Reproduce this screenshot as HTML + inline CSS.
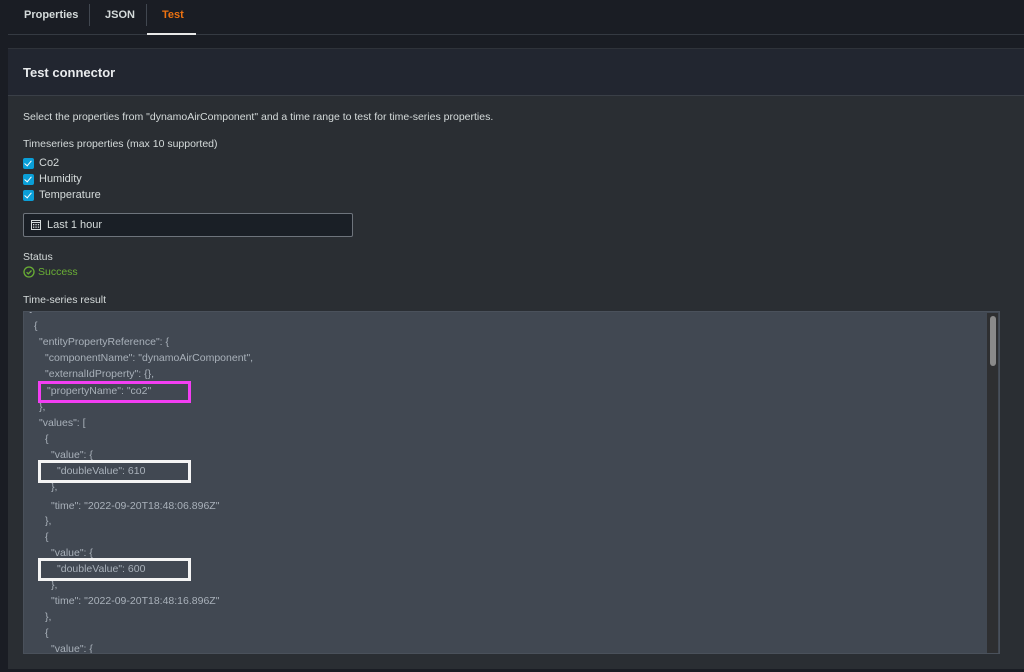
<!DOCTYPE html>
<html><head><meta charset="utf-8"><style>
*{margin:0;padding:0;box-sizing:border-box}
body{width:1024px;height:672px;background:#1a1d24;font-family:"Liberation Sans",sans-serif;position:relative;overflow:hidden;color:#d5dbdb}
.a{position:absolute;white-space:nowrap}
.tab{font-size:11px;font-weight:bold;top:9px;color:#d5dbdb}
.sep{position:absolute;top:4px;width:1px;height:22px;background:#414750}
.cb{position:absolute;left:23px;width:11px;height:11px;background:#0a9fd8;border-radius:2px}
.cb:after{content:"";position:absolute;left:3px;top:1px;width:3px;height:6px;border:solid #fff;border-width:0 1.6px 1.6px 0;transform:rotate(40deg)}
.lbl{font-size:11px;color:#d5dbdb}
.j{position:absolute;font-size:10.5px;color:#a9b1ba;white-space:pre}
</style></head><body>
<div class="a tab" style="left:24px">Properties</div>
<div class="sep" style="left:89px"></div>
<div class="a tab" style="left:105px">JSON</div>
<div class="sep" style="left:146px"></div>
<div class="a tab" style="left:162px;color:#ec7211">Test</div>
<div style="position:absolute;left:8px;top:34px;width:1016px;height:1px;background:#353a42"></div>
<div style="position:absolute;left:147px;top:33px;width:49px;height:2px;background:#e8e8e8"></div>

<div style="position:absolute;left:8px;top:48px;width:1016px;height:621px;background:#2a2e33">
<div style="height:48px;background:#222630;border-top:1px solid #2f333a;border-bottom:1px solid #3a3f47"></div>
</div>
<div class="a" style="left:23px;top:65px;font-size:13px;font-weight:bold;color:#e9ebed">Test connector</div>
<div class="a lbl" style="left:23px;top:111px;font-size:10.5px">Select the properties from "dynamoAirComponent" and a time range to test for time-series properties.</div>
<div class="a lbl" style="left:23px;top:138px;font-size:10.5px">Timeseries properties (max 10 supported)</div>
<div class="cb" style="top:158px"></div><div class="a lbl" style="left:39px;top:157px">Co2</div>
<div class="cb" style="top:174px"></div><div class="a lbl" style="left:39px;top:173px">Humidity</div>
<div class="cb" style="top:190px"></div><div class="a lbl" style="left:39px;top:189px">Temperature</div>
<div style="position:absolute;left:23px;top:213px;width:330px;height:24px;background:#1a1f26;border:1px solid #6e747c;border-radius:2px"></div>
<svg style="position:absolute;left:31px;top:220px" width="10" height="10" viewBox="0 0 10 10"><rect x="0.5" y="0.5" width="9" height="9" fill="none" stroke="#d5dbdb"/><line x1="0.5" y1="2.5" x2="9.5" y2="2.5" stroke="#d5dbdb"/><g fill="#d5dbdb"><rect x="2" y="4" width="1.3" height="1.3"/><rect x="4.4" y="4" width="1.3" height="1.3"/><rect x="6.8" y="4" width="1.3" height="1.3"/><rect x="2" y="6.5" width="1.3" height="1.3"/><rect x="4.4" y="6.5" width="1.3" height="1.3"/><rect x="6.8" y="6.5" width="1.3" height="1.3"/></g></svg>
<div class="a lbl" style="left:47px;top:219px">Last 1 hour</div>
<div class="a lbl" style="left:23px;top:251px;font-size:10.5px">Status</div>
<svg style="position:absolute;left:23px;top:266px" width="12" height="12" viewBox="0 0 12 12"><circle cx="6" cy="6" r="5" fill="none" stroke="#6aaf35" stroke-width="1.3"/><path d="M3.6 6.2l1.7 1.6 3.2-3.3" fill="none" stroke="#6aaf35" stroke-width="1.3"/></svg>
<div class="a lbl" style="left:38px;top:266px;color:#6aaf35;font-size:10.5px">Success</div>
<div class="a lbl" style="left:23px;top:294px;font-size:10.5px">Time-series result</div>

<div style="position:absolute;left:23px;top:311px;width:977px;height:343px;background:#414852;border:1px solid #4a515b;overflow:hidden">
<div class="j" style="left:5px;top:-10px">[</div>
</div>
<div style="position:absolute;left:987px;top:313px;width:11px;height:340px;background:#2e2f31"></div>
<div style="position:absolute;left:990px;top:316px;width:6px;height:50px;background:#8a8a8a;border-radius:3px"></div>

<div class="j" style="left:34px;top:320px">{</div>
<div class="j" style="left:39px;top:336px">"entityPropertyReference": {</div>
<div class="j" style="left:45px;top:352px">"componentName": "dynamoAirComponent",</div>
<div class="j" style="left:45px;top:368px">"externalIdProperty": {},</div>
<div class="j" style="left:47px;top:385px">"propertyName": "co2"</div>
<div class="j" style="left:39px;top:401px">},</div>
<div class="j" style="left:39px;top:417px">"values": [</div>
<div class="j" style="left:45px;top:433px">{</div>
<div class="j" style="left:51px;top:449px">"value": {</div>
<div class="j" style="left:57px;top:465px">"doubleValue": 610</div>
<div class="j" style="left:51px;top:481px">},</div>
<div class="j" style="left:51px;top:500px">"time": "2022-09-20T18:48:06.896Z"</div>
<div class="j" style="left:45px;top:515px">},</div>
<div class="j" style="left:45px;top:531px">{</div>
<div class="j" style="left:51px;top:547px">"value": {</div>
<div class="j" style="left:57px;top:563px">"doubleValue": 600</div>
<div class="j" style="left:51px;top:579px">},</div>
<div class="j" style="left:51px;top:595px">"time": "2022-09-20T18:48:16.896Z"</div>
<div class="j" style="left:45px;top:611px">},</div>
<div class="j" style="left:45px;top:627px">{</div>
<div class="j" style="left:51px;top:643px;height:10px;overflow:hidden">"value": {</div>

<div style="position:absolute;left:38px;top:381px;width:153px;height:22px;border:3px solid #f33ef3"></div>
<div style="position:absolute;left:38px;top:460px;width:153px;height:23px;border:3px solid #f4f4f4"></div>
<div style="position:absolute;left:38px;top:558px;width:153px;height:23px;border:3px solid #f4f4f4"></div>
</body></html>
